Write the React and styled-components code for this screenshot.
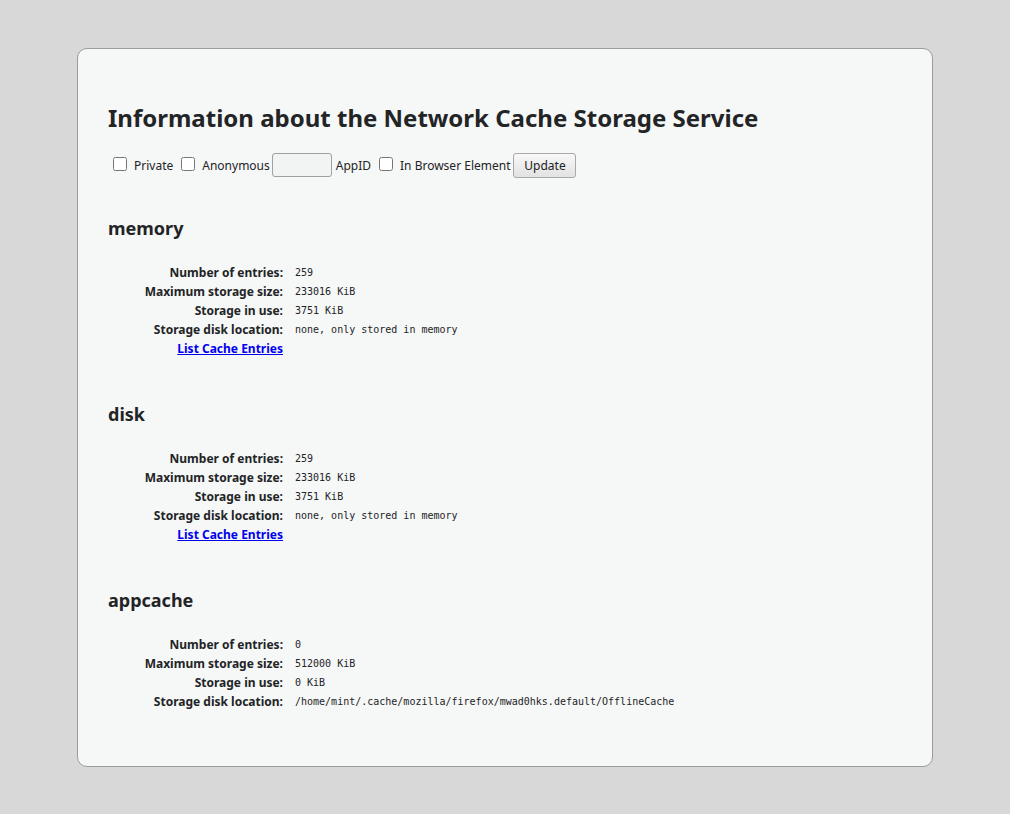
import React from "react";
import styled, { createGlobalStyle } from "styled-components";

const Global = createGlobalStyle`
  html, body { margin: 0; padding: 0; }
  body {
    background: #d8d8d8;
    font-family: "Noto Sans", "Open Sans", sans-serif;
    color: #222426;
  }
`;

const Page = styled.div`
  padding: 48px 77px 47px 77px;
`;

const Card = styled.main`
  box-sizing: border-box;
  min-height: 719px;
  background: #f6f7f7;
  border: 1px solid #9b9b9b;
  border-radius: 10px;
  padding: 49px 30px 50px 30px;
`;

const Title = styled.h1`
  margin: 0 0 14px 0;
  font-size: 24px;
  font-weight: 700;
  line-height: 40px;
`;

const Form = styled.form`
  display: flex;
  align-items: center;
  font-size: 12px;
  padding-left: 5px;
  height: 26px;
`;

const Check = styled.input.attrs({ type: "checkbox" })`
  margin: 0 7px 3px 0;
  width: 14px;
  height: 14px;
`;

const Label = styled.label`
  display: flex;
  align-items: center;
  margin-right: ${(p) => p.$gap ?? 8}px;
`;

const AppId = styled.input`
  box-sizing: border-box;
  width: 60px;
  height: 24px;
  border: 1px solid #a0a0a0;
  border-radius: 3px;
  background: #f2f3f3;
  margin: 0 4px 0 0;
`;

const Button = styled.button`
  box-sizing: border-box;
  font: inherit;
  font-size: 12px;
  width: 63px;
  height: 25px;
  padding: 0;
  border: 1px solid #a8a8a8;
  border-radius: 3px;
  background: linear-gradient(#f8f8f8, #e2e2e2);
  color: #222;
`;

const Section = styled.section`
  margin-top: ${(p) => p.$top}px;
`;

const SectionTitle = styled.h2`
  margin: 0 0 22px 0;
  font-size: 18px;
  font-weight: 700;
  line-height: 26px;
`;

const Table = styled.table`
  border-collapse: collapse;
`;

const Th = styled.th`
  box-sizing: border-box;
  width: 181px;
  text-align: right;
  font-size: 12px;
  font-weight: 700;
  white-space: nowrap;
  padding: 0 6px 0 0;
  height: 19px;
`;

const Td = styled.td`
  font-family: "DejaVu Sans Mono", monospace;
  font-size: 10px;
  padding: 0 0 0 6px;
  color: #222426;
  white-space: nowrap;
`;

const Link = styled.a`
  color: #0000ee;
  text-decoration: underline;
  font-weight: 700;
`;

const sections = [
  {
    name: "memory",
    entries: "259",
    max: "233016 KiB",
    used: "3751 KiB",
    location: "none, only stored in memory",
    link: true,
    top: 37,
  },
  {
    name: "disk",
    entries: "259",
    max: "233016 KiB",
    used: "3751 KiB",
    location: "none, only stored in memory",
    link: true,
    top: 43,
  },
  {
    name: "appcache",
    entries: "0",
    max: "512000 KiB",
    used: "0 KiB",
    location: "/home/mint/.cache/mozilla/firefox/mwad0hks.default/OfflineCache",
    link: false,
    top: 43,
  },
];

export default function App() {
  return (
    <>
      <Global />
      <Page>
        <Card>
          <Title>Information about the Network Cache Storage Service</Title>
          <Form onSubmit={(e) => e.preventDefault()}>
            <Label>
              <Check />
              Private
            </Label>
            <Label $gap={2}>
              <Check />
              Anonymous
            </Label>
            <AppId />
            <Label $gap={8}>AppID</Label>
            <Label $gap={3}>
              <Check />
              In Browser Element
            </Label>
            <Button type="submit">Update</Button>
          </Form>
          {sections.map((s) => (
            <Section key={s.name} $top={s.top}>
              <SectionTitle>{s.name}</SectionTitle>
              <Table>
                <tbody>
                  <tr>
                    <Th>Number of entries:</Th>
                    <Td>{s.entries}</Td>
                  </tr>
                  <tr>
                    <Th>Maximum storage size:</Th>
                    <Td>{s.max}</Td>
                  </tr>
                  <tr>
                    <Th>Storage in use:</Th>
                    <Td>{s.used}</Td>
                  </tr>
                  <tr>
                    <Th>Storage disk location:</Th>
                    <Td>{s.location}</Td>
                  </tr>
                  {s.link && (
                    <tr>
                      <Th>
                        <Link href="#">List Cache Entries</Link>
                      </Th>
                      <Td />
                    </tr>
                  )}
                </tbody>
              </Table>
            </Section>
          ))}
        </Card>
      </Page>
    </>
  );
}
